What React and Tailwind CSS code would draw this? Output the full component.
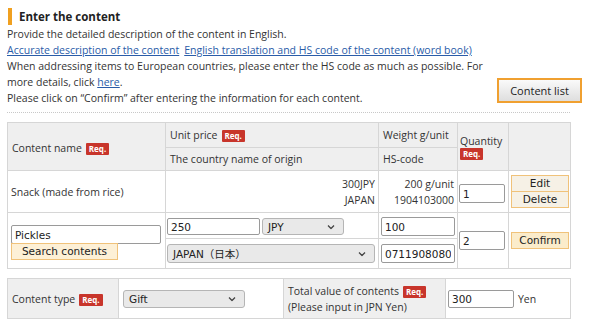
import { useState } from "react";

function Req() {
  return (
    <span className="inline-block align-middle ml-1 px-[3px] h-[12px] leading-[12px] rounded-[1px] bg-[#c8352b] text-white text-[8px] font-bold">
      Req.
    </span>
  );
}

function Chevron() {
  return (
    <svg width="8" height="5" viewBox="0 0 8 5" className="absolute right-[9px] top-1/2 -translate-y-1/2 pointer-events-none">
      <path d="M1 1l3 3 3-3" fill="none" stroke="#444" strokeWidth="1.3" />
    </svg>
  );
}

function Select({ value, className }) {
  return (
    <div className={"relative " + className}>
      <div className="h-full w-full border border-[#b5b5b5] rounded-[3px] bg-[#e9e9e9] pl-[5px] flex items-center text-[10.5px] text-[#222] font-['DejaVu_Sans','Noto_Sans_CJK_JP',sans-serif]">
        {value}
      </div>
      <Chevron />
    </div>
  );
}

function Input({ value, className }) {
  return (
    <input
      defaultValue={value}
      className={"border border-[#9a9a9a] rounded-[2px] bg-white px-[3px] text-[10.5px] text-[#222] font-['DejaVu_Sans',sans-serif] outline-none " + className}
    />
  );
}

function SmallButton({ children, className }) {
  return (
    <button className={"border border-[#f0c27a] text-[10.5px] text-[#222] font-['DejaVu_Sans',sans-serif] leading-none " + className}>
      {children}
    </button>
  );
}

export default function App() {
  const [type] = useState("Gift");

  return (
    <div className="w-[600px] h-[324px] bg-white overflow-hidden text-[#333] text-[10.5px] leading-[16px] font-['Open_Sans',sans-serif]">
      <div className="pl-[7px] pt-[8px]">
        <div className="ml-px border-l-[4px] border-[#f0a020] pl-[7px] h-[17px] leading-[17px] font-bold text-[11.5px] text-[#222]">
          Enter the content
        </div>
        <div className="flex items-end mt-[1px]">
          <div className="w-[490px]">
            <div>Provide the detailed description of the content in English.</div>
            <div>
              <a href="#" className="text-[#2a5ca8] underline">Accurate description of the content</a>
              <a href="#" className="ml-[5px] text-[#2a5ca8] underline">English translation and HS code of the content (word book)</a>
            </div>
            <div>
              When addressing items to European countries, please enter the HS code as much as possible. For
              <br />
              more details, click <a href="#" className="text-[#2a5ca8] underline">here</a>.
            </div>
            <div>Please click on “Confirm” after entering the information for each content.</div>
          </div>
          <button className="mb-[3px] w-[85px] h-[25px] border-2 border-[#f0a030] bg-gradient-to-b from-[#fafafa] to-[#dedede] text-[11px] text-[#222]">
            Content list
          </button>
        </div>
      </div>

      <div className="ml-[7px] mt-[6px] w-[563px] border-t border-dotted border-[#c8c8c8]"></div>

      <table className="ml-[7px] mt-[9px] w-[563px] table-fixed border-collapse">
        <colgroup>
          <col className="w-[158px]" />
          <col className="w-[213px]" />
          <col className="w-[79px]" />
          <col className="w-[51px]" />
          <col className="w-[62px]" />
        </colgroup>
        <tbody>
          <tr className="h-[25px] bg-[#efefef]">
            <td rowSpan={2} className="border border-[#d6d6d6] pl-[4px] pt-[2px]">
              Content name<Req />
            </td>
            <td className="border border-[#d6d6d6] pl-[4px]">
              Unit price<Req />
            </td>
            <td className="border border-[#d6d6d6] pl-[4px]">Weight g/unit</td>
            <td rowSpan={2} className="border border-[#d6d6d6] pl-[2px] align-top pt-[10px]">
              <div>Quantity</div>
              <div className="-mt-[1px] leading-none"><span className="inline-block px-[3px] h-[12px] leading-[12px] rounded-[1px] bg-[#c8352b] text-white text-[8px] font-bold">Req.</span></div>
            </td>
            <td rowSpan={2} className="border border-[#d6d6d6]"></td>
          </tr>
          <tr className="h-[23px] bg-[#efefef]">
            <td className="border border-[#d6d6d6] pl-[4px]">The country name of origin</td>
            <td className="border border-[#d6d6d6] pl-[4px]">HS-code</td>
          </tr>
          <tr className="h-[42px]">
            <td className="border border-[#d6d6d6] pl-[3px]">Snack (made from rice)</td>
            <td className="border border-[#d6d6d6] pr-[3px] text-right">
              <div>300JPY</div>
              <div>JAPAN</div>
            </td>
            <td className="border border-[#d6d6d6] pr-[3px] text-right">
              <div>200 g/unit</div>
              <div>1904103000</div>
            </td>
            <td className="border border-[#d6d6d6] pl-[1px]">
              <Input value="1" className="w-[46px] h-[19px] mt-[4px]" />
            </td>
            <td className="border border-[#d6d6d6] pl-[2px]">
              <div className="flex flex-col">
                <SmallButton className="w-[58px] h-[17px] bg-[#f6f1e6]">Edit</SmallButton>
                <SmallButton className="w-[58px] h-[17px] bg-[#f6f1e6] -mt-px">Delete</SmallButton>
              </div>
            </td>
          </tr>
          <tr className="h-[26px]">
            <td rowSpan={2} className="border border-[#d6d6d6] pl-[3px] pt-[4px]">
              <Input value="Pickles" className="block w-[150px] h-[19px]" />
              <SmallButton className="block w-[107px] h-[17px] bg-[#fdf0d6] mt-[-1px]">Search contents</SmallButton>
            </td>
            <td className="border border-[#d6d6d6] pl-[1px] pt-[2px]">
              <div className="flex gap-[2px]">
                <Input value="250" className="w-[93px] h-[17px]" />
                <Select value="JPY" className="w-[82px] h-[17px]" />
              </div>
            </td>
            <td className="border border-[#d6d6d6] pl-[2px] pt-[2px]">
              <Input value="100" className="w-[74px] h-[19px]" />
            </td>
            <td rowSpan={2} className="border border-[#d6d6d6] pl-[1px]">
              <Input value="2" className="w-[46px] h-[19px]" />
            </td>
            <td rowSpan={2} className="border border-[#d6d6d6] pl-[2px]">
              <SmallButton className="w-[58px] h-[17px] bg-[#fbeccb]">Confirm</SmallButton>
            </td>
          </tr>
          <tr className="h-[30px]">
            <td className="border border-[#d6d6d6] pl-[1px]">
              <Select value="JAPAN（日本）" className="w-[208px] h-[19px]" />
            </td>
            <td className="border border-[#d6d6d6] pl-[2px]">
              <Input value="0711908080" className="w-[74px] h-[19px] px-[2px]" />
            </td>
          </tr>
        </tbody>
      </table>

      <table className="ml-[7px] mt-[9px] w-[563px] table-fixed border-collapse">
        <colgroup>
          <col className="w-[111px]" />
          <col className="w-[165px]" />
          <col className="w-[162px]" />
          <col className="w-[125px]" />
        </colgroup>
        <tbody>
          <tr className="h-[40px]">
            <td className="border border-[#d6d6d6] bg-[#efefef] pl-[4px]">
              Content type<Req />
            </td>
            <td className="border border-[#d6d6d6] pl-[4px]">
              <Select value={type} className="w-[122px] h-[18px]" />
            </td>
            <td className="border border-[#d6d6d6] bg-[#efefef] pl-[4px]">
              <div>Total value of contents<Req /></div>
              <div>(Please input in JPN Yen)</div>
            </td>
            <td className="border border-[#d6d6d6] pl-[2px]">
              <div className="flex items-center">
                <Input value="300" className="w-[66px] h-[18px]" />
                <span className="ml-[4px]">Yen</span>
              </div>
            </td>
          </tr>
        </tbody>
      </table>
    </div>
  );
}
